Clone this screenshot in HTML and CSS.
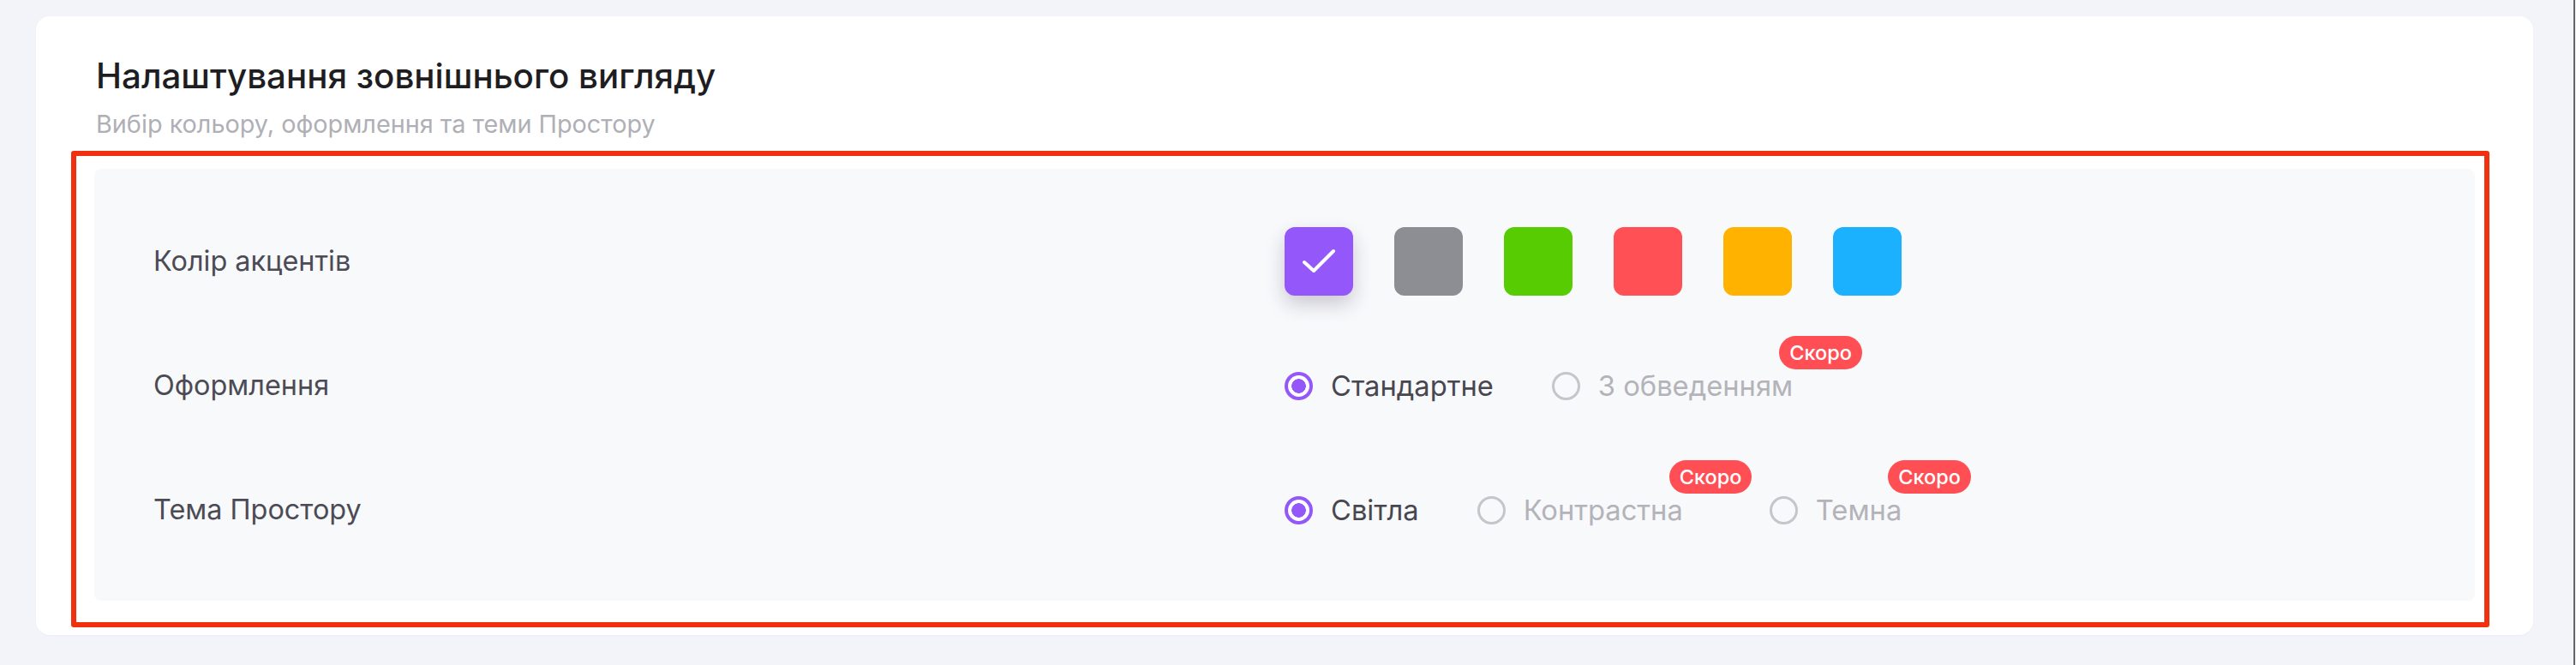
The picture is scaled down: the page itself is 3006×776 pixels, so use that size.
FILE: index.html
```html
<!DOCTYPE html>
<html lang="uk">
<head>
<meta charset="utf-8">
<title>Налаштування зовнішнього вигляду</title>
<link rel="stylesheet" href="styles.css">
</head>
<body>
<div class="page">
  <section class="card">
    <h1 class="title">Налаштування зовнішнього вигляду</h1>
    <p class="subtitle">Вибір кольору, оформлення та теми Простору</p>
    <div class="panel">
      <div class="row">
        <div class="label">Колір акцентів</div>
        <div class="controls swatches">
          <span class="swatch purple selected">
            <svg viewBox="0 0 80 80" width="80" height="80"><path d="M23 41 L34 51 L57 28" fill="none" stroke="#fff" stroke-width="4" stroke-linecap="round" stroke-linejoin="round"/></svg>
          </span>
          <span class="swatch gray"></span>
          <span class="swatch green"></span>
          <span class="swatch red"></span>
          <span class="swatch orange"></span>
          <span class="swatch blue"></span>
        </div>
      </div>
      <div class="row">
        <div class="label">Оформлення</div>
        <div class="controls radios">
          <span class="radio checked"><span class="dot"></span><span class="text">Стандартне</span></span>
          <span class="radio disabled"><span class="dot"></span><span class="text">З обведенням<span class="badge">Скоро</span></span></span>
        </div>
      </div>
      <div class="row">
        <div class="label">Тема Простору</div>
        <div class="controls radios">
          <span class="radio checked"><span class="dot"></span><span class="text">Світла</span></span>
          <span class="radio disabled has-badge"><span class="dot"></span><span class="text">Контрастна<span class="badge">Скоро</span></span></span>
          <span class="radio disabled has-badge"><span class="dot"></span><span class="text">Темна<span class="badge">Скоро</span></span></span>
        </div>
      </div>
    </div>
    <div class="highlight"></div>
  </section>
</div>
</body>
</html>
```

FILE: styles.css
```css
* { box-sizing: border-box; }
html, body {
  margin: 0;
  padding: 0;
  background: #f3f4f9;
}
body {
  font-family: Inter, "Noto Sans", sans-serif;
  width: 3006px;
  height: 776px;
  overflow: hidden;
}
.page {
  width: 3005px;
  height: 776px;
  border-right: 2px solid #666;
  padding: 19px 0 0 42px;
}
.card {
  position: relative;
  width: 2914px;
  height: 722px;
  background: #fff;
  border-radius: 16px;
  padding: 46px 68px 39px 68px;
  box-shadow: 0 1px 2px rgba(0,0,0,0.03);
}
.title {
  margin: 0 0 14px 2px;
  font-size: 40.3px;
  line-height: 48px;
  font-weight: 500;
  color: #1e1e22;
}
.subtitle {
  margin: 0 0 34px 2px;
  font-size: 28.8px;
  line-height: 36px;
  font-weight: 400;
  color: #afafb6;
}
.panel {
  background: #f8f9fb;
  border-radius: 8px;
  padding: 68px 69px 66px 69px;
  display: flex;
  flex-direction: column;
  gap: 65px;
}
.row {
  display: grid;
  grid-template-columns: 1fr 1fr;
  align-items: center;
  height: 80px;
}
.label {
  font-size: 32.4px;
  line-height: 40px;
  color: #4c4b55;
}
.controls {
  display: flex;
  align-items: center;
}
.swatches { gap: 48px; }
.swatch {
  width: 80px;
  height: 80px;
  border-radius: 12px;
  display: block;
}
.swatch svg { display: block; }
.purple { background: #9458fa; }
.gray { background: #8c8e94; }
.green { background: #58cc02; }
.red { background: #ff5055; }
.orange { background: #ffb300; }
.blue { background: #1bb1ff; }
.selected { box-shadow: 0 10px 22px rgba(40, 30, 70, 0.22); }

.radios { gap: 68px; }
.radio {
  display: flex;
  align-items: center;
  gap: 21px;
}
.radio .dot {
  width: 33px;
  height: 33px;
  border-radius: 50%;
  border: 3px solid #c5c5ca;
  display: block;
  flex: none;
}
.radio.checked .dot {
  border: 4px solid #9458fa;
  background: radial-gradient(circle, #9458fa 0 8px, #fff 8.6px);
}
.radio .text {
  position: relative;
  font-size: 32.7px;
  line-height: 40px;
  color: #48474f;
}
.radio.disabled .text { color: #b3b3b9; }
.has-badge { margin-right: 33px; }
.badge {
  position: absolute;
  top: -38px;
  left: calc(100% - 16px);
  height: 39px;
  padding: 0 12px;
  border-radius: 20px;
  background: #ff4f55;
  color: #fff;
  font-size: 23.5px;
  line-height: 39px;
  font-weight: 500;
  white-space: nowrap;
}
.highlight {
  position: absolute;
  left: 41px;
  top: 157px;
  width: 2822px;
  height: 556px;
  border: 6px solid #f0300e;
  border-radius: 3px;
  pointer-events: none;
}
```
